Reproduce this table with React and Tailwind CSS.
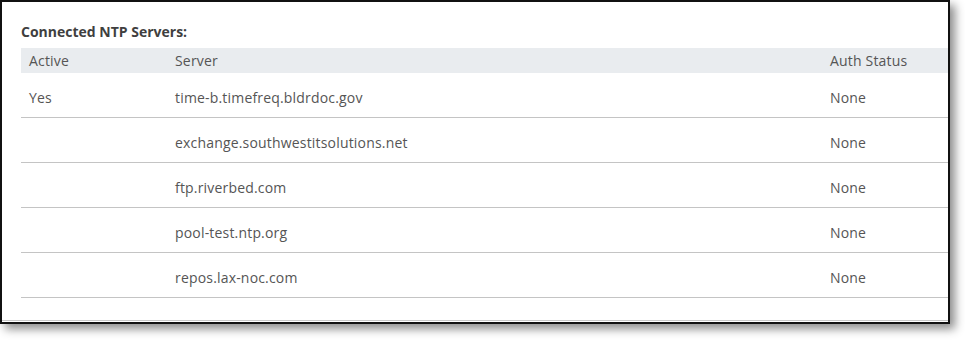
const servers = [
    {active: "Yes", name: "time-b.timefreq.bldrdoc.gov", auth: "None"},
    {active: "", name: "exchange.southwestitsolutions.net", auth: "None"},
    {active: "", name: "ftp.riverbed.com", auth: "None"},
    {active: "", name: "pool-test.ntp.org", auth: "None"},
    {active: "", name: "repos.lax-noc.com", auth: "None"},
];

const App = () => {
    return (
        <div className="w-[965px] h-[341px] bg-white" style={{fontFamily: '"Open Sans", sans-serif'}}>
            {/* Panel */}
            <div className="w-[950px] h-[324px] border-2 border-[#111] bg-white overflow-hidden shadow-[5px_5px_9px_rgba(0,0,0,0.45)]">
                <div className="h-[319px] border-b border-[#c8c8c8] pl-[19px] pt-[20px]">
                    <h3 className="text-[14px] leading-[19px] font-bold text-[#3f3f3f] mb-[7px]">Connected NTP Servers:</h3>
                    <div className="w-[940px] text-[14px] tracking-[0.18px] text-[#555]">
                        <div className="flex items-center h-[25px] bg-[#e9ecef]">
                            <div className="w-[154px] pl-[8px]">Active</div>
                            <div className="w-[655px]">Server</div>
                            <div>Auth Status</div>
                        </div>
                        {servers.map((s) => (
                            <div key={s.name} className="flex items-center h-[45px] border-b border-[#c4c4c4] pt-[4px]">
                                <div className="w-[154px] pl-[8px]">{s.active}</div>
                                <div className="w-[655px]">{s.name}</div>
                                <div>{s.auth}</div>
                            </div>
                        ))}
                    </div>
                </div>
            </div>
        </div>
    );
};

export default App;
